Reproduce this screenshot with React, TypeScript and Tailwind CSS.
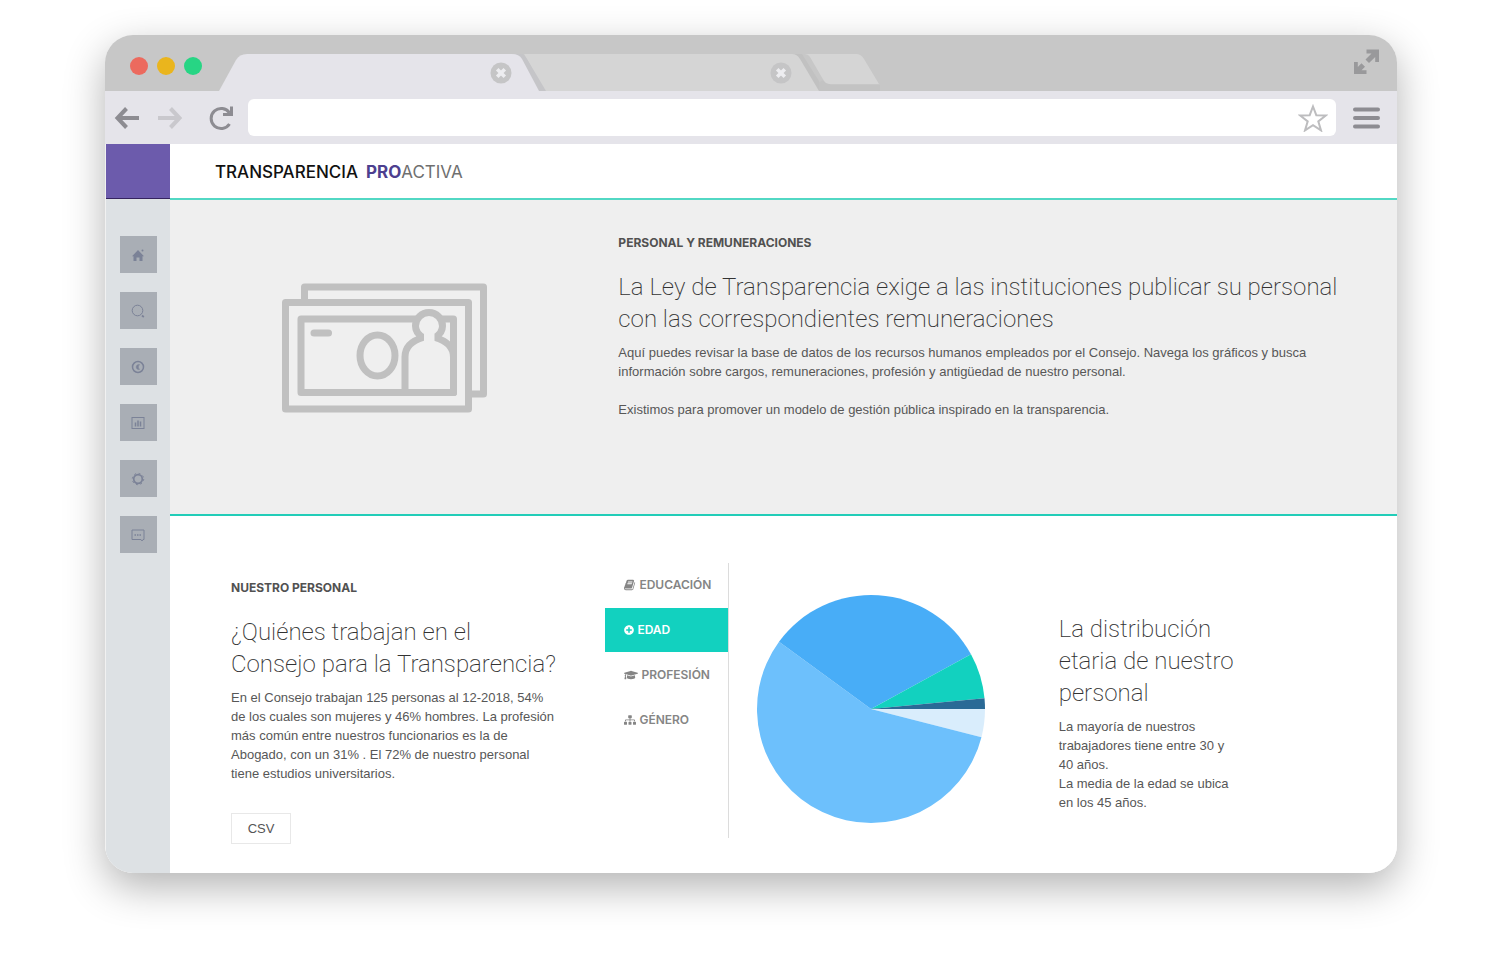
import type { ReactNode } from "react";
import { FaGraduationCap, FaPlusCircle, FaSitemap } from "react-icons/fa";

const TEAL_TAB = "bg-[#12d1bf] text-white";

function CloseBadge() {
  return (
    <svg viewBox="0 0 22 22" className="size-[22px]" aria-hidden="true">
      <circle cx="11" cy="11" r="10.5" fill="#c5c5c6" />
      <path d="M7.2 7.2l7.6 7.6M14.8 7.2l-7.6 7.6" stroke="#ededf0" strokeWidth="3.6" />
    </svg>
  );
}

function WindowBar() {
  return (
    <div className="flex h-14 items-end bg-[#c7c7c7] pl-[25px] pr-[17px]">
      <div className="mb-4 flex gap-[9px]">
        <span className="size-[18px] rounded-full bg-[#ec6a5e]" />
        <span className="size-[18px] rounded-full bg-[#eab51d]" />
        <span className="size-[18px] rounded-full bg-[#27d584]" />
      </div>
      <div className="ml-[17px] flex h-[37px] items-end">
        <svg viewBox="0 0 30 37" className="h-[37px] w-[30px]" aria-hidden="true">
          <path d="M0 37L17 6Q20.500 0 28 0H30V37Z" fill="#e5e4ea" />
        </svg>
        <button aria-label="Cerrar pestaña" className="flex h-[37px] w-[263px] items-center justify-end bg-[#e5e4ea]">
          <CloseBadge />
        </button>
        <svg viewBox="0 0 34 37" className="h-[37px] w-[34px]" aria-hidden="true">
          <path d="M12 0H34V37H33Z" fill="#d5d5d5" />
          <path d="M0 0H10Q13 1 15 5L34 37H27Z" fill="#c5c5c8" />
          <path d="M0 0Q7 0 10 5L27 37H0Z" fill="#e5e4ea" />
        </svg>
        <button aria-label="Cerrar pestaña" className="flex h-[37px] w-[246px] items-center justify-end bg-[#d5d5d5]">
          <CloseBadge />
        </button>
        <svg viewBox="0 0 27 37" className="h-[37px] w-[27px]" aria-hidden="true">
          <path d="M0 0H10L27 27V37H0Z" fill="#c1c1c1" />
          <path d="M0 0Q5 0 8 5L27 37H0Z" fill="#d5d5d5" />
        </svg>
        <button aria-label="Nueva pestaña" className="-ml-[15px] h-[37px] w-[76px]">
          <svg viewBox="0 0 76 37" className="h-[37px] w-[76px]" aria-hidden="true">
            <path d="M15 28L20 26L27 31H76V37H15Z" fill="#c3c3c3" />
            <path d="M1 0H52Q57 0 60 5L75 30H25Q22 30 20 27L6 3Q4 0 1 0Z" fill="#d5d5d5" />
          </svg>
        </button>
      </div>
      <button aria-label="Pantalla completa" className="mb-4 ml-auto">
        <svg viewBox="0 0 28 26" className="h-[26px] w-7" aria-hidden="true" fill="#99999b">
          <path d="M14.500 0.500H27V13H23.200V8L17 14L13.500 10.500L19.500 4.500H14.500Z" />
          <path d="M2 13H5.800V18L9.500 14.300L13 17.800L9.500 21.200H14.500V25H2Z" />
        </svg>
      </button>
    </div>
  );
}

function Toolbar() {
  return (
    <div className="flex h-[53px] items-center bg-[#e5e4ea] pl-[9px] pr-[17px]">
      <button aria-label="Atrás">
        <svg viewBox="0 0 26 22" className="h-[22px] w-[26px]" fill="none" stroke="#8d8c92" strokeWidth="4">
          <path d="M12.500 1.500L3.500 11L12.500 20.500M3.500 11H25" />
        </svg>
      </button>
      <button aria-label="Adelante" className="ml-[18px]">
        <svg viewBox="0 0 26 22" className="h-[22px] w-[26px]" fill="none" stroke="#c9c8cd" strokeWidth="4">
          <path d="M12.500 1.500L21.500 11L12.500 20.500M22 11H0" />
        </svg>
      </button>
      <button aria-label="Recargar" className="ml-6">
        <svg viewBox="0 0 26 26" className="size-[26px]" fill="none" stroke="#8d8c92" strokeWidth="3">
          <path d="M21.500 19A10 10 0 1 1 21.500 8" />
          <path d="M23.500 1.500V9.500H15" />
        </svg>
      </button>
      <div className="ml-[14px] flex h-[37px] flex-1 items-center rounded-md bg-white pr-2">
        <input aria-label="Dirección" className="h-full min-w-0 flex-1 bg-transparent px-3 font-['Liberation_Sans',sans-serif] text-sm outline-none" />
        <button aria-label="Favorito">
          <svg viewBox="0 0 30 28" className="h-7 w-[30px]" fill="none" stroke="#bdbdbf" strokeWidth="2">
            <path d="M15 2.500L18.300 11.200L27.800 11.500L20.300 17.400L23 26.400L15 21.200L7 26.400L9.700 17.400L2.200 11.500L11.700 11.200Z" />
          </svg>
        </button>
      </div>
      <button aria-label="Menú" className="ml-[17px]">
        <svg viewBox="0 0 27 22" className="h-[22px] w-[27px]" stroke="#8d8c92" strokeWidth="4" strokeLinecap="round">
          <path d="M2 2.500H25M2 11H25M2 19.500H25" />
        </svg>
      </button>
    </div>
  );
}

const sideIcons: { label: string; icon: ReactNode }[] = [
  {
    label: "Inicio",
    icon: (
      <g fill="#7b8297" stroke="none">
        <path d="M7 2L13 8.300H11.500V13H8.500V9.500H5.500V13H2.500V8.300H1Z" />
        <circle cx="11.500" cy="2.500" r="1" />
      </g>
    ),
  },
  {
    label: "Buscar",
    icon: (
      <>
        <circle cx="6.500" cy="6.500" r="5.300" />
        <path d="M11 11.500L12.800 13" strokeWidth="1.700" />
      </>
    ),
  },
  {
    label: "Presupuesto",
    icon: (
      <>
        <circle cx="7" cy="7" r="5.500" strokeWidth="1.500" />
        <path d="M8.500 4.500A2.600 2.600 0 1 0 8.500 9.500A3.500 3.500 0 0 1 8.500 4.500Z" fill="#7b8297" strokeWidth=".5" />
      </>
    ),
  },
  {
    label: "Estadísticas",
    icon: (
      <>
        <rect x="1" y="1.500" width="12" height="11" />
        <path d="M4.500 6.500V10.500M7 4.500V10.500M9.500 5.500V10.500" strokeWidth="1.500" />
      </>
    ),
  },
  {
    label: "Ajustes",
    icon: (
      <>
        <circle cx="7" cy="7" r="4.300" strokeWidth="1.700" />
        <circle cx="7" cy="7" r="5.700" strokeWidth="1" strokeDasharray="1.800 2.676" />
      </>
    ),
  },
  {
    label: "Mensajes",
    icon: (
      <>
        <path d="M1 2H13V11.500H12L11 13L10 11.500H1Z" />
        <path d="M3.500 7H10.500" strokeDasharray="1.500 1" strokeWidth="1.500" />
      </>
    ),
  },
];

function Sidebar() {
  return (
    <aside className="flex w-16 shrink-0 flex-col bg-[#dde1e4]">
      <div className="h-[55px] border-b border-[#35235f] bg-[#6c5bac]" />
      <nav className="mt-[37px] flex flex-col items-center gap-[19px]">
        {sideIcons.map(({ label, icon }) => (
          <button key={label} aria-label={label} className="flex size-[37px] items-center justify-center bg-[#a9aeb5]">
            <svg viewBox="0 0 14 14" className="size-[14px]" fill="none" stroke="#7b8297" strokeWidth="1" aria-hidden="true">
              {icon}
            </svg>
          </button>
        ))}
      </nav>
    </aside>
  );
}

function Banknotes() {
  return (
    <svg viewBox="0 0 207 130" className="h-[130px] w-[207px]" fill="none" stroke="#c0c0c0" strokeWidth="7" strokeLinejoin="round" aria-hidden="true">
      <path d="M23.500 16V4H202.500V111H190" />
      <rect x="4.500" y="19.500" width="183" height="106.500" />
      <rect x="20" y="36" width="152.500" height="73.500" />
      <path d="M33 50H47.500" strokeLinecap="round" />
      <ellipse cx="96.500" cy="72.500" rx="17.500" ry="20.500" />
      <path
        d="M124 109.500V74C124 65 130 58 142 54.500C136 51 134.500 47 134.500 43A13.500 13.500 0 0 1 161.500 43C161.500 47 160 51 154 54.500C166 58 172.500 65 172.500 74V109.500Z"
        fill="#efefef"
      />
      <path d="M143 54.500H153.500" stroke="#efefef" strokeWidth="8" />
      <path d="M172.500 36V109.500H120.500" />
    </svg>
  );
}

function Label({ children }: { children: ReactNode }) {
  return <h2 className="mb-5 font-['Inter',sans-serif] text-xs leading-4 font-bold text-[#515151]">{children}</h2>;
}

function Headline({ children }: { children: ReactNode }) {
  return <h3 className="mb-2 font-['Roboto',sans-serif] text-2xl leading-8 font-extralight text-[#333]">{children}</h3>;
}

function Hero() {
  return (
    <section className="grid grid-cols-[448fr_778fr] border-b-2 border-[#22cdb8] bg-[#efefef] pt-[35px] pb-[95px]">
      <div className="flex justify-center pt-12 pr-5">
        <Banknotes />
      </div>
      <div className="pr-10">
        <Label>PERSONAL Y REMUNERACIONES</Label>
        <Headline>
          La Ley de Transparencia exige a las instituciones publicar su personal
          <br />
          con las correspondientes remuneraciones
        </Headline>
        <p className="mb-[19px] text-[13px] leading-[19px]">
          Aquí puedes revisar la base de datos de los recursos humanos empleados por el Consejo. Navega los gráficos y busca
          <br />
          información sobre cargos, remuneraciones, profesión y antigüedad de nuestro personal.
        </p>
        <p className="text-[13px] leading-[19px]">
          Existimos para promover un modelo de gestión pública inspirado en la transparencia.
        </p>
      </div>
    </section>
  );
}

function BookIcon() {
  return (
    <svg viewBox="0 0 1792 1792" className="size-3" fill="currentColor" aria-hidden="true">
      <path d="M1639 478q40 57 18 129l-275 906q-19 64-76.5 107.5t-122.5 43.5h-923q-77 0-148.500-53.500t-99.500-131.500q-24-67-2-127 0-4 3-27t4-37q1-8-3-21.500t-3-19.500q2-11 8-21t16.500-23.500 16.500-23.500q23-38 45-91.500t30-91.500q3-10 .5-30t-.5-28q3-11 17-28t17-23q21-36 42-92t25-90q1-9-2.500-32t.5-28q4-13 22-30.500t22-22.500q19-26 42.500-84.500t27.500-96.500q1-8-3-25.500t-2-26.500q2-8 9-18t18-23 17-21q8-12 16.500-30.500t15-35 16-36 19.500-32 26.500-23.500 36-11.500 47.500 5.500l-1 3q38-9 51-9h761q74 0 114 56t18 130l-274 906q-36 119-71.500 153.500t-128.500 34.500h-869q-27 0-38 15-11 16-1 43 24 70 144 70h923q29 0 56-15.500t35-41.500l300-987q7-22 5-57 38 15 59 43zm-1064 2q-4 13 2 22.500t20 9.500h608q13 0 25.500-9.500t16.500-22.500l21-64q4-13-2-22.500t-20-9.500h-608q-13 0-25.500 9.500t-16.500 22.500zm-83 256q-4 13 2 22.500t20 9.500h608q13 0 25.500-9.500t16.500-22.500l21-64q4-13-2-22.500t-20-9.500h-608q-13 0-25.500 9.500t-16.500 22.500z" />
    </svg>
  );
}

const topics = [
  { name: "EDUCACIÓN", icon: <BookIcon />, active: false },
  { name: "EDAD", icon: <FaPlusCircle className="size-[10px]" />, active: true },
  { name: "PROFESIÓN", icon: <FaGraduationCap className="h-3 w-[14px]" />, active: false },
  { name: "GÉNERO", icon: <FaSitemap className="size-3" />, active: false },
];

const slices = [
  { from: 0, to: 14.3, color: "#d9edfc" },
  { from: 14.3, to: 216.2, color: "#6dc0fc" },
  { from: 216.2, to: 331.3, color: "#48adf7" },
  { from: 331.3, to: 354.6, color: "#12d1bf" },
  { from: 354.6, to: 360, color: "#2a6a96" },
];

function slicePath(from: number, to: number) {
  const point = (deg: number) => {
    const a = (deg * Math.PI) / 180;
    return `${(115 + 114 * Math.cos(a)).toFixed(2)} ${(115 + 114 * Math.sin(a)).toFixed(2)}`;
  };
  return `M115 115L${point(from)}A114 114 0 ${to - from > 180 ? 1 : 0} 1 ${point(to)}Z`;
}

function Staff() {
  return (
    <section className="grid grid-cols-[435fr_124px_329fr_338fr] bg-white pt-[47px] pb-[29px]">
      <div className="pt-[17px] pl-[61px]">
        <Label>NUESTRO PERSONAL</Label>
        <Headline>
          ¿Quiénes trabajan en el
          <br />
          Consejo para la Transparencia?
        </Headline>
        <p className="text-[13px] leading-[19px]">
          En el Consejo trabajan 125 personas al 12-2018, 54%
          <br />
          de los cuales son mujeres y 46% hombres. La profesión
          <br />
          más común entre nuestros funcionarios es la de
          <br />
          Abogado, con un 31% . El 72% de nuestro personal
          <br />
          tiene estudios universitarios.
        </p>
        <button className="mt-[30px] h-[31px] w-[60px] border border-[#e8e8e8] bg-white text-[13px] text-[#555]">CSV</button>
      </div>
      <div className="flex h-[275px] flex-col gap-px border-r border-[#dcdcdc]">
        {topics.map(({ name, icon, active }) => (
          <button
            key={name}
            aria-pressed={active}
            className={`flex h-11 items-center gap-[3px] pl-[19px] font-['Inter',sans-serif] text-xs font-semibold ${active ? TEAL_TAB : "text-[#858585]"}`}
          >
            {icon}
            {name}
          </button>
        ))}
      </div>
      <div className="pt-[31px] pl-[27px]">
        <svg viewBox="0 0 230 230" className="size-[230px]" role="img" aria-label="Distribución etaria">
          {slices.map((s) => (
            <path key={s.color} d={slicePath(s.from, s.to)} fill={s.color} />
          ))}
        </svg>
      </div>
      <div className="pt-[50px]">
        <Headline>
          La distribución
          <br />
          etaria de nuestro
          <br />
          personal
        </Headline>
        <p className="text-[13px] leading-[19px]">
          La mayoría de nuestros
          <br />
          trabajadores tiene entre 30 y
          <br />
          40 años.
          <br />
          La media de la edad se ubica
          <br />
          en los 45 años.
        </p>
      </div>
    </section>
  );
}

export default function App() {
  return (
    <div className="min-h-screen bg-white pt-[35px] pr-[103px] pb-20 pl-[105px] font-['Liberation_Sans',sans-serif] text-[#575757]">
      <div className="rounded-[28px] shadow-[0_14px_40px_rgba(0,0,0,0.3)]">
        <div className="overflow-hidden rounded-[28px]">
          <WindowBar />
          <Toolbar />
          <div className="flex bg-[#f1f1f1] pl-px">
            <Sidebar />
            <main className="min-w-0 flex-1">
              <header className="flex h-14 items-center border-b-2 border-[#52d8c4] bg-white pt-0.5 pl-[45px]">
                <h1 className="flex gap-2 font-['Inter',sans-serif] text-[17px] leading-6 font-medium text-[#111]">
                  <span>TRANSPARENCIA</span>
                  <span className="font-normal text-[#6f6f6f]">
                    <b className="font-bold text-[#4d3f8f]">PRO</b>ACTIVA
                  </span>
                </h1>
              </header>
              <Hero />
              <Staff />
            </main>
          </div>
        </div>
      </div>
    </div>
  );
}
